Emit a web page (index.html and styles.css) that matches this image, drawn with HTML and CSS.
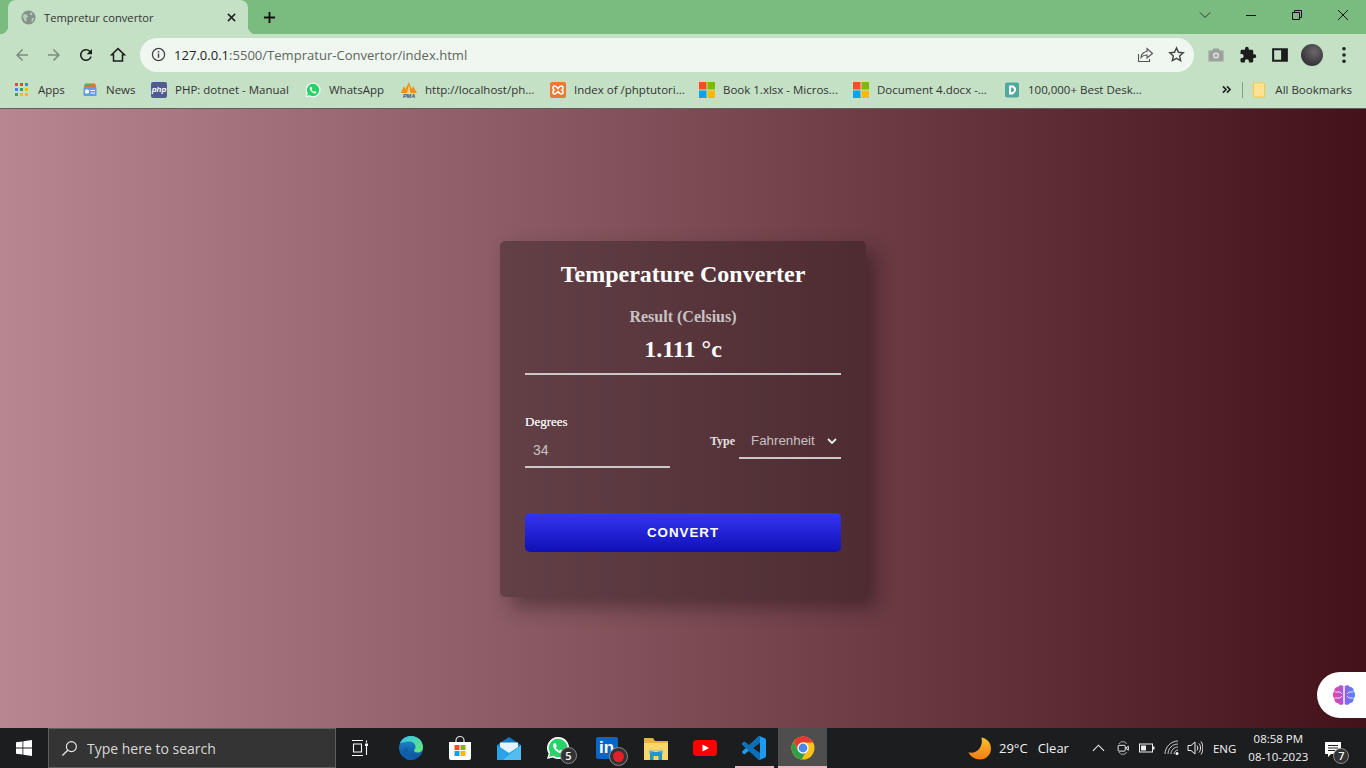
FILE: index.html
```html
<!DOCTYPE html>
<html lang="en">
<head>
    <meta charset="UTF-8">
    <meta name="viewport" content="width=device-width, initial-scale=1.0">
    <title>Tempretur convertor</title>
    <link rel="stylesheet" href="styles.css">
</head>
<body>

    <header class="browser">

        <div class="tabstrip">
            <div class="tab">
                <svg class="favicon" viewBox="0 0 16 16"><circle cx="8" cy="8" r="7.5" fill="#84928a"/><path d="M3 4 6.500 5l1 2.500-2 1 .5 2.500-1 2L3 10 2 7zM10 2.500l2.500 1.500-1 1.500-2-.5zM13 8l1 1-1.500 3.500-1.500-.5 .5-3z" fill="#c4e1c5" opacity=".75"/></svg>
                <span class="tab-title">Tempretur convertor</span>
                <svg class="tab-close" viewBox="0 0 10 10"><path d="M1 1l8 8M9 1l-8 8" stroke="#222" stroke-width="1.700"/></svg>
            </div>
            <svg class="new-tab" viewBox="0 0 14 14"><path d="M7 1v12M1 7h12" stroke="#111" stroke-width="2"/></svg>
            <div class="window-controls">
                <svg viewBox="0 0 12 12"><path d="M1 3.500l5 5 5-5" fill="none" stroke="#333" stroke-width="1"/></svg>
                <svg viewBox="0 0 12 12"><path d="M1 6.500h10" stroke="#111" stroke-width="1"/></svg>
                <svg viewBox="0 0 12 12"><path d="M1.500 3.500h7v7h-7zM3.500 3.500v-2h7v7h-2" fill="none" stroke="#111" stroke-width="1"/></svg>
                <svg viewBox="0 0 12 12"><path d="M1 1l10 10M11 1L1 11" stroke="#111" stroke-width="1"/></svg>
            </div>
        </div>

        <div class="toolbar">
            <button class="tool"><svg viewBox="0 0 24 24"><path fill="#7d8a7e" d="M20 11H7.830l5.590-5.590L12 4l-8 8 8 8 1.410-1.410L7.830 13H20v-2z"/></svg></button>
            <button class="tool"><svg viewBox="0 0 24 24"><path fill="#7d8a7e" d="M12 4l-1.410 1.410L16.170 11H4v2h12.170l-5.580 5.590L12 20l8-8z"/></svg></button>
            <button class="tool"><svg viewBox="0 0 24 24"><path fill="#1c1c1c" d="M17.650 6.350A7.958 7.958 0 0 0 12 4c-4.420 0-7.990 3.580-7.990 8s3.570 8 7.990 8c3.730 0 6.840-2.550 7.730-6h-2.080A5.990 5.990 0 0 1 12 18c-3.310 0-6-2.690-6-6s2.690-6 6-6c1.660 0 3.140.690 4.220 1.780L13 11h7V4l-2.350 2.350z"/></svg></button>
            <button class="tool"><svg viewBox="0 0 24 24"><path fill="none" stroke="#1c1c1c" stroke-width="2" d="M12 3.500 3.500 11.500H6V20h12v-8.500h2.500z"/></svg></button>

            <div class="omnibox">
                <svg class="omni-info" viewBox="0 0 16 16"><circle cx="8" cy="8" r="6.500" fill="none" stroke="#444" stroke-width="1.400"/><path d="M7.200 7h1.600v4.500H7.200zM7.200 4.300h1.600v1.600H7.200z" fill="#444"/></svg>
                <span class="url"><span class="url-host">127.0.0.1</span>:5500/Tempratur-Convertor/index.html</span>
                <svg class="omni-action omni-share" viewBox="0 0 18 18"><path d="M2.500 8v7.500h11V13M5 11.500C5.500 7.500 8.500 5.500 11 5.500V2.500l5.500 5-5.500 4.500V9C8.500 9 6.500 9.800 5 11.500z" fill="none" stroke="#555" stroke-width="1.100"/></svg>
                <svg class="omni-action" viewBox="0 0 18 18"><path d="M9 2l2.100 4.700 5 .500-3.800 3.300 1.100 5L9 13l-4.400 2.500 1.100-5L1.900 7.200l5-.500z" fill="none" stroke="#444" stroke-width="1.500"/></svg>
            </div>

            <div class="tools-right">
                <button class="tool"><svg viewBox="0 0 18 18"><path fill="#9c9f9d" d="M6.500 2.500h5L13 4.500h3.500v11h-15v-11H5z"/><circle cx="9" cy="9.500" r="3" fill="#dbe8dc"/><circle cx="9" cy="9.500" r="1.600" fill="#9c9f9d"/></svg></button>
                <button class="tool"><svg viewBox="0 0 24 24"><path fill="#1c1c1c" d="M20.500 11H19V7c0-1.100-.9-2-2-2h-4V3.500a2.500 2.500 0 0 0-5 0V5H4c-1.100 0-1.990.9-1.990 2v3.800H3.500c1.490 0 2.700 1.210 2.700 2.700s-1.210 2.700-2.700 2.700H2V20c0 1.100.9 2 2 2h3.800v-1.500c0-1.490 1.210-2.700 2.700-2.700 1.490 0 2.700 1.210 2.700 2.700V22H17c1.100 0 2-.9 2-2v-4h1.500a2.500 2.500 0 0 0 0-5z"/></svg></button>
                <button class="tool"><svg viewBox="0 0 16 16"><path fill-rule="evenodd" fill="#1c1c1c" d="M1 2h14v12H1zM2.800 3.800v8.400H9V3.800z"/></svg></button>
                <button class="tool"><span class="avatar"></span></button>
                <button class="tool"><svg viewBox="0 0 16 16"><circle cx="8" cy="2.500" r="1.600" fill="#222"/><circle cx="8" cy="8" r="1.600" fill="#222"/><circle cx="8" cy="13.500" r="1.600" fill="#222"/></svg></button>
            </div>
        </div>

        <nav class="bookmarks">
            <a class="bookmark">
                <svg viewBox="0 0 13 13"><rect width="3" height="3" fill="#e8453c"/><rect x="5" width="3" height="3" fill="#e8453c"/><rect x="10" width="3" height="3" fill="#4285f4"/><rect y="5" width="3" height="3" fill="#4285f4"/><rect x="5" y="5" width="3" height="3" fill="#34a853"/><rect x="10" y="5" width="3" height="3" fill="#fbbc05"/><rect y="10" width="3" height="3" fill="#34a853"/><rect x="5" y="10" width="3" height="3" fill="#fbbc05"/><rect x="10" y="10" width="3" height="3" fill="#fbbc05"/></svg>
                Apps
            </a>
            <a class="bookmark">
                <svg viewBox="0 0 16 16"><path d="M3 1.500h10l1 3H2z" fill="#4caf6a"/><path d="M3 3.500l10-1.500 1 3H2z" fill="#e2703c"/><rect x="1.500" y="5" width="13" height="9" rx="1" fill="#5f9df0"/><rect x="3" y="7.500" width="4" height="4" rx="1.500" fill="#fff"/><rect x="8.500" y="8" width="4.500" height="1" fill="#fff"/><rect x="8.500" y="10.500" width="4.500" height="1" fill="#fff"/></svg>
                News
            </a>
            <a class="bookmark">
                <span class="php-badge">php</span>
                PHP: dotnet - Manual
            </a>
            <a class="bookmark">
                <svg viewBox="0 0 24 24"><path d="M12 1a11 11 0 0 0-9.400 16.600L1 23l5.600-1.500A11 11 0 1 0 12 1z" fill="#fff"/><path d="M12 2.800a9.200 9.200 0 0 0-7.800 14L3.200 20.800l4.100-1A9.200 9.200 0 1 0 12 2.800z" fill="#25d366"/><path d="M8.800 7c-.6 0-1.700.9-1.700 2.500 0 3.200 4.100 7.500 7.600 7.700 1.500 0 2.500-1.100 2.500-2 0-.4-2.200-1.500-2.600-1.400-.4.100-.8 1-1.200 1-.9-.2-3-2.100-3.400-3.100-.1-.4.700-1 .7-1.400C10.700 9.400 9.900 7 8.800 7z" fill="#fff"/></svg>
                WhatsApp
            </a>
            <a class="bookmark">
                <svg viewBox="0 0 16 16"><path d="M0 11 3 4l1.500 3L8 0l2.500 7L12 4l4 7z" fill="#f29111"/><path d="M6 11 8 3l1.500 8z" fill="#f9d488"/><text x="8" y="16" class="pma">PMA</text></svg>
                http://localhost/ph...
            </a>
            <a class="bookmark">
                <svg viewBox="0 0 16 16"><rect width="16" height="16" rx="2" fill="#f0782c"/><path d="M4.500 4c2 0 2.500 1.500 3.500 2.500C9 5.500 9.500 4 11.500 4 13.500 4 13.500 7 12 8c1.500 1 1.500 4-.5 4C9.500 12 9 10.500 8 9.500 7 10.500 6.500 12 4.500 12 2.500 12 2.500 9 4 8 2.500 7 2.500 4 4.500 4z" fill="none" stroke="#fff" stroke-width="1.600"/></svg>
                Index of /phptutori...
            </a>
            <a class="bookmark">
                <svg viewBox="0 0 16 16"><rect width="7.500" height="7.500" fill="#f25022"/><rect x="8.500" width="7.500" height="7.500" fill="#7fba00"/><rect y="8.500" width="7.500" height="7.500" fill="#00a4ef"/><rect x="8.500" y="8.500" width="7.500" height="7.500" fill="#ffb900"/></svg>
                Book 1.xlsx - Micros...
            </a>
            <a class="bookmark">
                <svg viewBox="0 0 16 16"><rect width="7.500" height="7.500" fill="#f25022"/><rect x="8.500" width="7.500" height="7.500" fill="#7fba00"/><rect y="8.500" width="7.500" height="7.500" fill="#00a4ef"/><rect x="8.500" y="8.500" width="7.500" height="7.500" fill="#ffb900"/></svg>
                Document 4.docx -...
            </a>
            <a class="bookmark">
                <svg viewBox="0 0 16 16"><rect x="1" y=".5" width="14" height="15" rx="2" fill="#4fa99f"/><path d="M5 3.500h4.500L12 6v3l-3 3.500H5z" fill="#fff"/><path d="M7 5.500h1.500L10 7v1.500L8.500 10H7z" fill="#4fa99f"/></svg>
                100,000+ Best Desk...
            </a>
            <div class="bookmarks-end">
                <svg class="more" viewBox="0 0 10 10"><path d="M1 1.500 4.500 5 1 8.500M5.500 1.500 9 5 5.500 8.500" fill="none" stroke="#222" stroke-width="1.800"/></svg>
                <span class="divider"></span>
                <a class="bookmark">
                    <svg viewBox="0 0 16 16"><path d="M2.500 1h11v14h-11z" fill="#fde293" stroke="#f8c945" stroke-width="1"/></svg>
                    All Bookmarks
                </a>
            </div>
        </nav>

    </header>

    <main class="page">

        <section class="card">
            <h1 class="card-title">Temperature Converter</h1>
            <p class="result-label">Result (Celsius)</p>
            <p class="result-value">1.111 °c</p>

            <form class="fields">
                <div class="field-degrees">
                    <label for="degrees">Degrees</label>
                    <input id="degrees" type="number" value="34">
                </div>
                <div class="field-type">
                    <label for="type">Type</label>
                    <div class="select-wrap">
                        <select id="type">
                            <option>Fahrenheit</option>
                            <option>Kelvin</option>
                        </select>
                        <svg class="select-arrow" viewBox="0 0 10 6"><path d="M1 1l4 4 4-4" fill="none" stroke="#eee" stroke-width="1.800"/></svg>
                    </div>
                </div>
            </form>

            <button class="convert">CONVERT</button>
        </section>

        <div class="brain-widget">
            <svg viewBox="0 0 24 22">
                <defs>
                    <linearGradient id="brainfill" x1="0" x2="1" y1="0" y2="0">
                        <stop offset="0" stop-color="#f0409a"/>
                        <stop offset=".5" stop-color="#9a5cf0"/>
                        <stop offset="1" stop-color="#4a86f5"/>
                    </linearGradient>
                </defs>
                <path d="M11.300 2C9.500.5 7 1 6 3 3.500 3 2 5 2.500 7 .5 8.500 .5 13 2.500 14.500 2 17 4 19 6 19c1 2 4 2.500 5.300 1zM12.700 2c1.800-1.500 4.300-1 5.300 1 2.500 0 4 2 3.500 4 2 1.500 2 6 0 7.500.5 2.500-1.500 4.500-3.500 4.500-1 2-4 2.500-5.300 1z" fill="url(#brainfill)"/>
                <path d="M3 8h5l2 2M3 14h5l2-2M21 8h-4l-2 2M21 14h-4l-2-2" fill="none" stroke="#fff" stroke-width=".8"/>
            </svg>
        </div>

    </main>

    <footer class="taskbar">
        <div class="start">
            <svg viewBox="0 0 16 16"><path fill="#fff" d="M0 2.300 6.500 1.400V7.600H0zM7.300 1.300 16 0V7.600H7.300zM0 8.400H6.500V14.600L0 13.700zM7.300 8.400H16V16L7.300 14.700z"/></svg>
        </div>
        <div class="search">
            <svg viewBox="0 0 18 18"><circle cx="11" cy="7" r="5.300" fill="none" stroke="#e8e8e8" stroke-width="1.200"/><path d="M7.200 10.800 1.500 16.500" stroke="#e8e8e8" stroke-width="1.400"/></svg>
            <span>Type here to search</span>
        </div>

        <div class="task task-view">
            <svg viewBox="0 0 16 16"><path d="M0 .5h11M0 15.500h11M1.500 4h8v8h-8zM14.500 .5v2M14.500 6v9" fill="none" stroke="#fff" stroke-width="1.100"/><rect x="13" y="3.500" width="3" height="2.500" fill="#fff"/></svg>
        </div>
        <div class="task">
            <svg viewBox="0 0 24 24">
                <defs>
                    <linearGradient id="edgeblue" x1="0" x2="0" y1="0" y2="1"><stop offset="0" stop-color="#1c8fd8"/><stop offset="1" stop-color="#0c4d94"/></linearGradient>
                    <linearGradient id="edgegreen" x1="0" x2="1" y1="0" y2="1"><stop offset="0" stop-color="#35c1f1"/><stop offset="1" stop-color="#66eb6e"/></linearGradient>
                </defs>
                <circle cx="12" cy="12" r="12" fill="url(#edgeblue)"/>
                <path d="M1 7C3 2.500 7.500 0 12 0c7 0 12 5 12 11.500 0 3-2.500 5-5.500 5-2 0-3.500-1-3.500-2 0-1 1.500-1.500 1.500-3.500C16.500 8 14 5.500 10.500 5.500 6.500 5.500 3 7 1 7z" fill="url(#edgegreen)"/>
                <path d="M9 13c-1 4 2.500 9.500 9 8.500-1.500 1.500-3.500 2.500-6 2.500-2 0-4-.5-5-1.500C4 20 3.500 16 5 13.500 6 12 8 11.500 9 13z" fill="#0f5ea8"/>
            </svg>
        </div>
        <div class="task">
            <svg viewBox="0 0 24 24"><path d="M8 7V4.500a4 4 0 0 1 8 0V7" fill="none" stroke="#ddd" stroke-width="1.200"/><path d="M1 6h22v16a2 2 0 0 1-2 2H3a2 2 0 0 1-2-2z" fill="#fff"/><rect x="6.500" y="9" width="5" height="5" fill="#f25022"/><rect x="12.500" y="9" width="5" height="5" fill="#7fba00"/><rect x="6.500" y="15" width="5" height="5" fill="#00a4ef"/><rect x="12.500" y="15" width="5" height="5" fill="#ffb900"/></svg>
        </div>
        <div class="task">
            <svg viewBox="0 0 24 24"><path d="M0 9 12 1l12 8v14H0z" fill="#1477c4"/><path d="M3 6.500h18v8L12 19 3 14z" fill="#e6f3fb"/><path d="M0 9l12 8 12-8v15H0z" fill="#29a3e8"/><path d="M24 9v15H6z" fill="#54bdf0"/></svg>
        </div>
        <div class="task">
            <svg viewBox="0 0 24 24"><path d="M12 1a11 11 0 0 0-9.400 16.600L1 23l5.600-1.500A11 11 0 1 0 12 1z" fill="#fff"/><path d="M12 2.800a9.200 9.200 0 0 0-7.800 14L3.200 20.800l4.100-1A9.200 9.200 0 1 0 12 2.800z" fill="#25d366"/><path d="M8.800 7c-.6 0-1.700.9-1.700 2.500 0 3.200 4.100 7.500 7.600 7.700 1.500 0 2.500-1.100 2.500-2 0-.4-2.200-1.500-2.600-1.400-.4.100-.8 1-1.200 1-.9-.2-3-2.100-3.400-3.100-.1-.4.700-1 .7-1.400C10.700 9.400 9.900 7 8.800 7z" fill="#fff"/></svg>
            <span class="task-badge task-badge-whatsapp">5</span>
        </div>
        <div class="task">
            <span class="linkedin">in</span>
            <span class="task-badge task-badge-linkedin"><i></i></span>
        </div>
        <div class="task">
            <svg viewBox="0 0 24 24"><path d="M0 2h9l2 3h13v19H0z" fill="#e6b33e"/><path d="M0 7h24v17H0z" fill="#fbd76a"/><path d="M6 24v-8h12v8h-3.500v-4h-5v4z" fill="#2a8fd4"/><path d="M5 17.500l7-3 7 3v-3H5z" fill="#59b4ea"/></svg>
        </div>
        <div class="task">
            <svg viewBox="0 0 24 18"><rect width="24" height="16" y="1" rx="3.500" fill="#f00"/><path d="M9.500 5.500 16 9l-6.500 3.500z" fill="#fff"/></svg>
        </div>
        <div class="task task-open">
            <svg viewBox="0 0 24 24"><path fill="#1d9bf0" d="M23.150 2.587L18.210.21a1.494 1.494 0 0 0-1.705.29l-9.460 8.630-4.120-3.128a.999.999 0 0 0-1.276.057L.327 7.261A1 1 0 0 0 .326 8.740L3.899 12 .326 15.260a1 1 0 0 0 .001 1.479L1.650 17.940a.999.999 0 0 0 1.276.057l4.120-3.128 9.460 8.630a1.492 1.492 0 0 0 1.704.29l4.942-2.377A1.500 1.500 0 0 0 24 20.060V3.939a1.500 1.500 0 0 0-.85-1.352zm-5.146 14.861L10.826 12l7.178-5.448v10.896z"/><path fill="#0a6fb8" d="M7.045 9.130 2.925 6.002a.999.999 0 0 0-1.276.057L.327 7.261A1 1 0 0 0 .326 8.740L12 19.400l4.500 4.100a1.492 1.492 0 0 0 1.500.3V16.900L10.826 12 18 6.550V.1a1.494 1.494 0 0 0-1.500.4z"/></svg>
        </div>
        <div class="task task-open task-active">
            <svg viewBox="0 0 24 24"><circle cx="12" cy="12" r="11.500" fill="#fbc116"/><path d="M2.600 5.400A11.500 11.500 0 0 1 22.300 6.500H12L7.200 14.700z" fill="#e33b2e"/><path d="M2.600 5.400A11.500 11.500 0 0 0 10.600 23.400L15.400 15H7.200z" fill="#2f9e48"/><circle cx="12" cy="12" r="5.700" fill="#fff"/><circle cx="12" cy="12" r="4.400" fill="#4a88f0"/></svg>
        </div>

        <div class="tray">
            <svg class="tray-moon" viewBox="0 0 24 24"><defs><linearGradient id="moonfill" x1="0" x2="0" y1="0" y2="1"><stop offset="0" stop-color="#fbc02d"/><stop offset="1" stop-color="#f07c12"/></linearGradient></defs><path d="M14 .5c6 1 10 5.500 10 11.500 0 6.500-5 11.500-11.500 11.500C7 23.500 2.500 20.500 .5 16c8 2.500 16-5.500 13.500-15.500z" fill="url(#moonfill)"/></svg>
            <span class="tray-temp">29°C</span>
            <span class="tray-sky">Clear</span>
            <svg class="tray-up" viewBox="0 0 14 8"><path d="M1 7l6-6 6 6" fill="none" stroke="#eee" stroke-width="1.200"/></svg>
            <svg class="tray-icon tray-cam" viewBox="0 0 16 18"><path d="M3.500 4.500C4.500 1 11 1 12 4.500M3.500 13.500C4.500 17 11 17 12 13.500" fill="none" stroke="#ddd" stroke-width=".8"/><rect x="2.500" y="6" width="8" height="6.500" rx="1" fill="none" stroke="#eee" stroke-width="1.100"/><path d="M11 9l3-2v4.500z" fill="none" stroke="#eee" stroke-width="1.100"/></svg>
            <svg class="tray-icon tray-battery" viewBox="0 0 16 10"><rect x=".5" y="1" width="13" height="8" fill="none" stroke="#eee"/><rect x="2" y="2.500" width="5" height="5" fill="#eee"/><rect x="14" y="3.500" width="1.500" height="3" fill="#eee"/></svg>
            <svg class="tray-icon tray-wifi" viewBox="0 0 16 16"><path d="M1 14C1 7 7 1 14 1M4 14c0-5.500 4.500-10 10-10M7 14c0-3.800 3-7 7-7M10 14c0-2 2-4 4-4" fill="none" stroke="#ddd" stroke-width=".9"/><circle cx="13" cy="13.500" r="1.500" fill="#fff"/></svg>
            <svg class="tray-icon tray-volume" viewBox="0 0 16 16"><path d="M1 5.500h3L8 2v12L4 10.500H1z" fill="none" stroke="#eee" stroke-width="1"/><path d="M10 5.500c1 1.500 1 3.500 0 5M12 3.500c2 2.500 2 6.500 0 9M14 1.500c2.500 3.500 2.500 9.500 0 13" fill="none" stroke="#eee" stroke-width="1"/></svg>
            <span class="tray-lang">ENG</span>
            <div class="clock">
                <span>08:58 PM</span>
                <span>08-10-2023</span>
            </div>
            <div class="notify">
                <svg viewBox="0 0 16 16"><path d="M0 0h16v12H6l-3 3v-3H0z" fill="#fff"/><path d="M3 3.500h10M3 6h10M3 8.500h7" stroke="#222" stroke-width="1"/></svg>
                <span class="task-badge task-badge-notify">7</span>
            </div>
        </div>
    </footer>

</body>
</html>
```

FILE: styles.css
```css
* {
    box-sizing: border-box;
}

html, body {
    height: 100%;
}

body {
    margin: 0;
    display: flex;
    flex-direction: column;
    overflow: hidden;
    font-family: "Open Sans", "Noto Sans", sans-serif;
}

/* browser window */

.browser {
    flex: none;
    background: #c4e1c5;
    border-bottom: 1px solid #6b5a5c;
}

.tabstrip {
    height: 34px;
    display: flex;
    align-items: flex-end;
    padding-left: 8px;
    background: #7abc7f;
}

.tab {
    position: relative;
    width: 240px;
    height: 34px;
    display: flex;
    align-items: center;
    padding: 0 11px 0 13px;
    background: #c4e1c5;
    border-radius: 8px 8px 0 0;
}

.tab::before,
.tab::after {
    content: "";
    position: absolute;
    bottom: 0;
    width: 8px;
    height: 8px;
}

.tab::before {
    left: -8px;
    background: radial-gradient(circle at 0 0, transparent 8px, #c4e1c5 8.5px);
}

.tab::after {
    right: -8px;
    background: radial-gradient(circle at 100% 0, transparent 8px, #c4e1c5 8.5px);
}

.favicon {
    width: 15px;
    height: 15px;
    margin-right: 8px;
}

.tab-title {
    flex: 1;
    font-size: 11.2px;
    color: #333;
}

.tab-close {
    width: 9px;
    height: 9px;
    margin-right: 1px;
}

.new-tab {
    width: 13px;
    height: 13px;
    margin: 0 0 10px 15px;
}

.window-controls {
    margin-left: auto;
    align-self: flex-start;
    display: flex;
    padding-top: 9px;
}

.window-controls svg {
    width: 12px;
    height: 12px;
    margin-right: 34px;
}

.window-controls svg:last-child {
    margin-right: 17px;
}

.toolbar {
    height: 41px;
    display: flex;
    align-items: center;
    padding: 0 6px;
}

.tool {
    width: 32px;
    height: 32px;
    display: flex;
    align-items: center;
    justify-content: center;
    padding: 0;
    border: 0;
    background: none;
}

.tool svg {
    width: 18px;
    height: 18px;
}

.omnibox {
    flex: 1;
    height: 34px;
    margin: 0 6px;
    display: flex;
    align-items: center;
    padding: 0 9px 0 11px;
    background: #f0f7f0;
    border-radius: 17px;
}

.omni-info {
    width: 15px;
    height: 15px;
    margin-right: 8px;
}

.url {
    flex: 1;
    font-size: 13.05px;
    color: #5c665f;
}

.url-host {
    color: #222;
}

.omni-action {
    width: 17px;
    height: 17px;
    margin-left: 14px;
}

.omni-share {
    width: 18px;
    height: 18px;
}

.tools-right {
    display: flex;
}

.avatar {
    width: 22px;
    height: 22px;
    border-radius: 50%;
    background: radial-gradient(circle at 60% 35%, #6b6668, #38363a 70%);
}

.bookmarks {
    height: 33px;
    display: grid;
    grid-template-columns: 67px 69px 154px 96px 149px 149px 154px 151px 1fr auto;
    align-items: center;
    padding: 0 14px 4px 15px;
}

.bookmark {
    display: flex;
    align-items: center;
    gap: 8px;
    font-size: 11.5px;
    color: #333;
    white-space: nowrap;
}

.bookmark svg {
    width: 16px;
    height: 16px;
    flex: none;
}

.bookmark:first-child svg {
    width: 13px;
    height: 13px;
    margin-right: 2px;
}

.php-badge {
    width: 16px;
    height: 16px;
    background: #4f5b93;
    color: #fff;
    font: italic bold 8px/15px "Liberation Sans", sans-serif;
    text-align: center;
    border-radius: 2px;
}

.pma {
    font: bold italic 5.5px "Liberation Sans", sans-serif;
    fill: #3b4a7a;
    text-anchor: middle;
}

.bookmarks-end {
    display: flex;
    align-items: center;
}

.more {
    width: 9px;
    height: 9px;
}

.divider {
    width: 1px;
    height: 16px;
    margin: 0 8px 0 11px;
    background: #8aa08b;
}

/* the converter page */

.page {
    position: relative;
    flex: 1;
    display: flex;
    align-items: center;
    justify-content: center;
    background: linear-gradient(to right, #b78690, #42111a);
}

.card {
    width: 366px;
    padding: 16px 25px 45px;
    background: rgba(20, 15, 15, 0.35);
    border-radius: 5px;
    box-shadow: 10px 10px 20px rgba(0, 0, 0, 0.35);
    font-family: "Liberation Serif", serif;
    text-align: center;
    color: #fff;
}

.card-title {
    margin: 0;
    font-size: 24px;
    line-height: 34px;
}

.result-label {
    margin: 17px 0 0;
    font-size: 16px;
    font-weight: bold;
    line-height: 17px;
    color: #c9c2c3;
}

.result-value {
    margin: 10px 0 0;
    padding-bottom: 10px;
    font-size: 24px;
    font-weight: bold;
    line-height: 28px;
    border-bottom: 2px solid #ccc8c8;
}

.fields {
    margin-top: 39px;
    display: flex;
    align-items: center;
    justify-content: space-between;
    text-align: left;
}

.field-degrees {
    width: 145px;
}

.field-degrees label {
    display: block;
    font-size: 13px;
    line-height: 15px;
    color: #eee;
    text-shadow: 0 0 .5px #eee;
}

.field-degrees input {
    display: block;
    width: 100%;
    height: 39px;
    padding: 5px 8px 0;
    background: none;
    border: 0;
    border-bottom: 2px solid #ccc8c8;
    border-radius: 0;
    font: 14px "Liberation Sans", sans-serif;
    color: #c9c2c3;
    outline: none;
    appearance: textfield;
}

.field-type {
    display: flex;
    align-items: center;
    gap: 4px;
}

.field-type label {
    padding-top: 1px;
    font-size: 12px;
    font-weight: bold;
    color: #e6e0e0;
}

.select-wrap {
    position: relative;
}

.select-wrap select {
    display: block;
    width: 102px;
    height: 36px;
    padding: 2px 0 0 12px;
    background: none;
    border: 0;
    border-bottom: 2px solid #ccc8c8;
    border-radius: 0;
    font: 13.33px "Liberation Sans", sans-serif;
    color: #c9c2c3;
    appearance: none;
}

.select-arrow {
    position: absolute;
    right: 4px;
    top: 15px;
    width: 10px;
    height: 6px;
}

.convert {
    display: block;
    width: 100%;
    height: 39px;
    margin-top: 45px;
    background: linear-gradient(to bottom, #3535f2, #1010b6);
    border: 0;
    border-radius: 5px;
    font: bold 13.33px "Liberation Sans", sans-serif;
    letter-spacing: 1px;
    color: #fff;
}

.brain-widget {
    position: absolute;
    right: 0;
    top: 563px;
    width: 49px;
    height: 46px;
    display: flex;
    align-items: center;
    padding-left: 15px;
    background: #fff;
    border-radius: 23px 0 0 23px;
}

.brain-widget svg {
    width: 24px;
    height: 22px;
}

/* windows taskbar */

.taskbar {
    flex: none;
    height: 40px;
    display: flex;
    background: #1b1d1f;
    color: #fff;
}

.start {
    width: 48px;
    display: flex;
    align-items: center;
    justify-content: center;
}

.start svg {
    width: 16px;
    height: 16px;
}

.search {
    width: 288px;
    display: flex;
    align-items: center;
    gap: 9px;
    padding-left: 12px;
    background: #343434;
    border: 1px solid #5f5f5f;
    font-size: 14px;
    color: #d8d8d8;
}

.search svg {
    width: 17px;
    height: 17px;
}

.task {
    position: relative;
    width: 49px;
    display: flex;
    align-items: center;
    justify-content: center;
}

.task > svg {
    width: 24px;
    height: 24px;
}

.task-view {
    width: 50px;
    padding-right: 2px;
}

.task-view > svg {
    width: 16px;
    height: 16px;
}

.task-open::after {
    content: "";
    position: absolute;
    left: 6px;
    right: 4px;
    bottom: 0;
    height: 2px;
    background: #f4b7c3;
}

.task-active {
    background: #4e4e4e;
}

.task-active::after {
    left: 0;
    right: 0;
}

.linkedin {
    width: 22px;
    height: 22px;
    background: #0a66c2;
    border-radius: 2px;
    font: bold 17px/22px "Liberation Sans", sans-serif;
    text-align: center;
    color: #fff;
}

.task-badge {
    position: absolute;
    width: 17px;
    height: 17px;
    display: flex;
    align-items: center;
    justify-content: center;
    background: #333;
    border: 1px solid #8a8a8a;
    border-radius: 50%;
    font-size: 11px;
    font-weight: 600;
    color: #fff;
}

.task-badge-whatsapp {
    left: 27px;
    top: 19px;
}

.task-badge-linkedin {
    left: 27px;
    top: 19px;
    width: 19px;
    height: 19px;
}

.task-badge-linkedin i {
    width: 11px;
    height: 11px;
    background: #e0202a;
    border-radius: 50%;
}

.tray {
    flex: 1;
    display: flex;
    align-items: center;
    padding-left: 141px;
    font-size: 13px;
    color: #f2f2f2;
}

.tray-moon {
    width: 23px;
    height: 23px;
}

.tray-temp {
    margin-left: 8px;
}

.tray-sky {
    margin-left: 10px;
}

.tray-up {
    width: 13px;
    height: 8px;
    margin-left: 23px;
}

.tray-icon {
    width: 16px;
    height: 16px;
}

.tray-cam {
    margin-left: 10px;
}

.tray-battery {
    margin-left: 8px;
}

.tray-wifi {
    margin-left: 9px;
}

.tray-volume {
    margin-left: 7px;
}

.tray-lang {
    margin-left: 10px;
    font-size: 11.5px;
}

.clock {
    width: 64px;
    margin-left: 10px;
    display: flex;
    flex-direction: column;
    align-items: center;
    font-size: 11.5px;
    line-height: 18px;
}

.notify {
    position: relative;
    margin-left: 15px;
    padding-top: 3px;
}

.notify svg {
    display: block;
    width: 16px;
    height: 16px;
}

.task-badge-notify {
    left: 8px;
    top: 9px;
    width: 16px;
    height: 16px;
}
```
